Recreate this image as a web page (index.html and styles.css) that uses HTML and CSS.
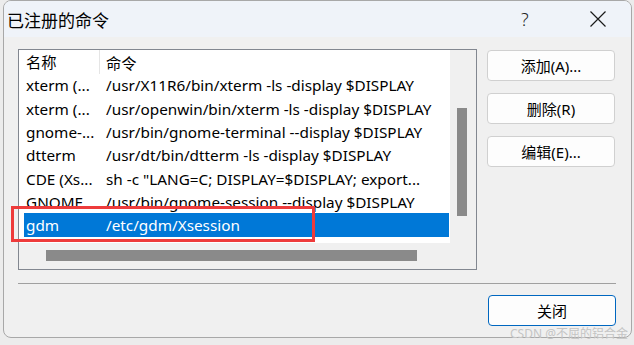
FILE: index.html
```html
<!DOCTYPE html>
<html lang="zh-CN">
<head>
    <meta charset="UTF-8">
    <title>已注册的命令</title>
    <link rel="stylesheet" href="styles.css">
</head>
<body>
    <div class="window">
        <div class="titlebar">
            <span class="title">已注册的命令</span>
            <span class="help">?</span>
            <span class="close-x">
                <svg width="16" height="16" viewBox="0 0 16 16">
                    <path d="M0.5 0.5 L15.5 15.5 M15.5 0.5 L0.5 15.5" stroke="#1a1a1a" stroke-width="1.2" fill="none"/>
                </svg>
            </span>
        </div>
        <div class="content">
            <div class="top">
                <div class="listbox">
                    <div class="list">
                        <div class="row header">
                            <span class="col-name">名称</span>
                            <span class="col-cmd">命令</span>
                        </div>
                        <div class="row"><span class="col-name">xterm (...</span><span class="col-cmd">/usr/X11R6/bin/xterm -ls -display $DISPLAY</span></div>
                        <div class="row"><span class="col-name">xterm (...</span><span class="col-cmd">/usr/openwin/bin/xterm -ls -display $DISPLAY</span></div>
                        <div class="row"><span class="col-name">gnome-...</span><span class="col-cmd">/usr/bin/gnome-terminal --display $DISPLAY</span></div>
                        <div class="row"><span class="col-name">dtterm</span><span class="col-cmd">/usr/dt/bin/dtterm -ls -display $DISPLAY</span></div>
                        <div class="row"><span class="col-name">CDE (Xs...</span><span class="col-cmd">sh -c "LANG=C; DISPLAY=$DISPLAY; export...</span></div>
                        <div class="row"><span class="col-name">GNOME ...</span><span class="col-cmd">/usr/bin/gnome-session --display $DISPLAY</span></div>
                        <div class="row selected"><span class="col-name">gdm</span><span class="col-cmd">/etc/gdm/Xsession</span></div>
                    </div>
                    <div class="vscroll"><div class="vthumb"></div></div>
                    <div class="hscroll"><div class="hthumb"></div></div>
                    <div class="corner"></div>
                </div>
                <div class="buttons">
                    <button class="btn">添加(A)...</button>
                    <button class="btn">删除(R)</button>
                    <button class="btn">编辑(E)...</button>
                </div>
            </div>
            <div class="separator"></div>
            <div class="bottom">
                <button class="btn default">关闭</button>
            </div>
        </div>
        <div class="mark"></div>
    </div>
    <div class="watermark">CSDN @不屈的铝合金</div>
</body>
</html>
```

FILE: styles.css
```css
html, body {
    margin: 0;
    padding: 0;
}
body {
    position: relative;
    width: 634px;
    height: 345px;
    background-color: #ececec;
    font-family: "Noto Sans", "Noto Sans CJK SC", sans-serif;
    font-size: 15.3px;
    color: #000;
    overflow: hidden;
}
.window {
    position: relative;
    box-sizing: border-box;
    width: 629px;
    height: 338px;
    margin-left: 3px;
    border: 1px solid #a8a8a8;
    border-radius: 8px;
    background-color: #f0f0f0;
    overflow: hidden;
}
.titlebar {
    display: flex;
    align-items: center;
    height: 36px;
    background-color: #eff3f9;
}
.title {
    flex: 1;
    padding-left: 3px;
    font-size: 17px;
    font-family: "Noto Sans CJK SC", sans-serif;
}
.help {
    width: 20px;
    margin-right: 49px;
    font-size: 18px;
    font-weight: 300;
    color: #222;
}
.close-x {
    display: flex;
    margin-right: 25px;
}
.content {
    padding: 12px 15px 0 14px;
}
.top {
    display: flex;
    gap: 10px;
}
.listbox {
    display: grid;
    grid-template-columns: 431px 26px;
    grid-template-rows: 193px 26px;
    width: 459px;
    border: 1px solid #828790;
    box-sizing: border-box;
    background-color: #f0f0f0;
}
.list {
    background-color: #fff;
    overflow: hidden;
    padding-left: 5px;
    white-space: nowrap;
}
.row {
    display: flex;
    height: 23.3px;
    align-items: center;
}
.row.header {
    height: 23.7px;
}
.col-name {
    width: 74px;
    padding-left: 2px;
}
.col-cmd {
    padding-left: 6px;
}
.header .col-name {
    border-right: 1px solid #e5e5e5;
    height: 24px;
    line-height: 24px;
    width: 73px;
}
.selected {
    background-color: #0078d7;
    color: #fff;
    width: 425px;
}
.vscroll {
    padding: 58px 0 0 7px;
}
.vthumb {
    width: 10px;
    height: 108px;
    background-color: #8a8a8a;
}
.hscroll {
    padding: 7px 0 0 27px;
}
.hthumb {
    width: 371px;
    height: 11px;
    background-color: #8a8a8a;
}
.buttons {
    display: flex;
    flex-direction: column;
    gap: 12px;
    padding-top: 1px;
}
.btn {
    width: 128px;
    height: 31px;
    box-sizing: border-box;
    border: 1px solid #d0d0d0;
    border-radius: 4px;
    background-color: #fdfdfd;
    font-family: "Noto Sans", "Noto Sans CJK SC", sans-serif;
    font-size: 15px;
    color: #000;
    padding: 0;
}
.btn.default {
    border-color: #0067c0;
}
.separator {
    height: 1px;
    margin-top: 13px;
    background-color: #a0a0a0;
}
.bottom {
    display: flex;
    justify-content: flex-end;
    margin-top: 11px;
}
.mark {
    position: absolute;
    left: 7px;
    top: 205px;
    width: 298px;
    height: 30px;
    border: 3px solid #ee3b3b;
}
.watermark {
    position: absolute;
    right: 6px;
    top: 327px;
    font-size: 12px;
    line-height: 13px;
    color: #c4c4c4;
    font-family: "Noto Sans", "Noto Sans CJK SC", sans-serif;
}
```
